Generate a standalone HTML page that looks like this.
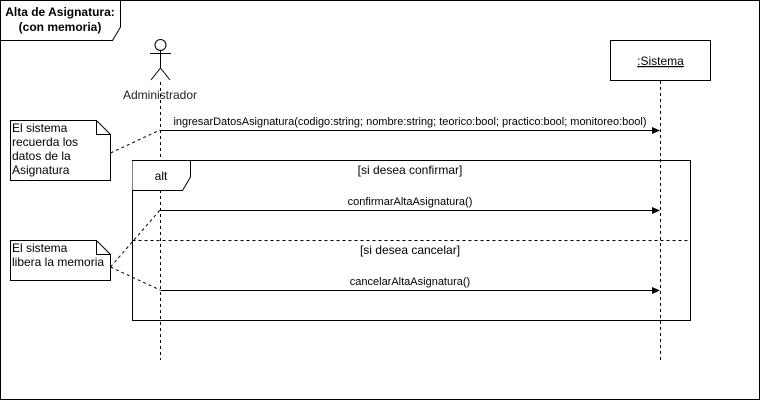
<!DOCTYPE html>
<html><head><meta charset="utf-8"><style>
html,body{margin:0;padding:0;background:#fff;}
svg{display:block;font-family:"Liberation Sans",Arial,sans-serif;}
</style></head><body>
<svg width="761" height="401" viewBox="0 0 761 401" xmlns="http://www.w3.org/2000/svg">
<rect x="0.5" y="0.5" width="759" height="399" fill="#fff" stroke="#000"/>
<path d="M0.5 0.5 H120.5 V27 L112.5 40.5 H0.5 Z" fill="#fff" stroke="#000"/>
<text x="60" y="16" font-size="12" font-weight="bold" text-anchor="middle">Alta de Asignatura:</text>
<text x="60" y="31" font-size="12" font-weight="bold" text-anchor="middle">(con memoria)</text>
<g stroke="#000" fill="none">
<circle cx="160.5" cy="45" r="5.5" fill="#fff"/>
<path d="M160.5 50.5 V68 M150 53.5 H171 M160.5 68 L151 80 M160.5 68 L170 80"/>
</g>
<text x="160" y="99" font-size="12" text-anchor="middle" fill="#222">Administrador</text>
<path d="M160.5 82 V360" stroke="#000" stroke-dasharray="3 3"/>
<rect x="610.5" y="40.5" width="100" height="40" fill="#fff" stroke="#000"/>
<text x="660.5" y="65" font-size="12" text-anchor="middle" text-decoration="underline">:Sistema</text>
<path d="M660.5 81 V360" stroke="#000" stroke-dasharray="3 3"/>
<text x="410" y="125" font-size="11" text-anchor="middle" textLength="473" lengthAdjust="spacingAndGlyphs">ingresarDatosAsignatura(codigo:string; nombre:string; teorico:bool; practico:bool; monitoreo:bool)</text>
<path d="M160.5 130.5 H652" stroke="#000"/>
<path d="M652 127 L660 130.5 L652 134 Z" fill="#000"/>
<path d="M10.5 120.5 H96.5 L110.5 134.5 V180.5 H10.5 Z" fill="#fff" stroke="#000"/>
<path d="M96.5 120.5 V134.5 H110.5" fill="none" stroke="#000"/>
<text font-size="12" fill="#000"><tspan x="12" y="132">El sistema</tspan><tspan x="12" y="146">recuerda los</tspan><tspan x="12" y="160">datos de la</tspan><tspan x="12" y="174">Asignatura</tspan></text>
<path d="M110.5 153 L160 130" stroke="#000" stroke-dasharray="3 3"/>
<rect x="132.5" y="160.5" width="558" height="160" fill="none" stroke="#000"/>
<path d="M132.5 160.5 H190.5 V177 L182.5 190.5 H132.5" fill="#fff" stroke="#000"/>
<text x="161" y="180" font-size="12" text-anchor="middle">alt</text>
<path d="M160.5 190 V320" stroke="#000" stroke-dasharray="3 3"/>
<text x="410" y="174" font-size="12" text-anchor="middle">[si desea confirmar]</text>
<text x="410" y="205" font-size="11" text-anchor="middle">confirmarAltaAsignatura()</text>
<path d="M160.5 210.5 H652" stroke="#000"/>
<path d="M652 207 L660 210.5 L652 214 Z" fill="#000"/>
<path d="M132.5 240.5 H690.5" stroke="#000" stroke-dasharray="3 3"/>
<text x="410" y="254" font-size="12" text-anchor="middle">[si desea cancelar]</text>
<text x="410" y="285" font-size="11" text-anchor="middle">cancelarAltaAsignatura()</text>
<path d="M160.5 290.5 H652" stroke="#000"/>
<path d="M652 287 L660 290.5 L652 294 Z" fill="#000"/>
<path d="M10.5 240.5 H96.5 L110.5 254.5 V280.5 H10.5 Z" fill="#fff" stroke="#000"/>
<path d="M96.5 240.5 V254.5 H110.5" fill="none" stroke="#000"/>
<text font-size="12"><tspan x="12" y="252">El sistema</tspan><tspan x="12" y="266">libera la memoria</tspan></text>
<path d="M110.5 267 L160 210 M110.5 267 L160 290" stroke="#000" stroke-dasharray="3 3"/>
</svg>
</body></html>
